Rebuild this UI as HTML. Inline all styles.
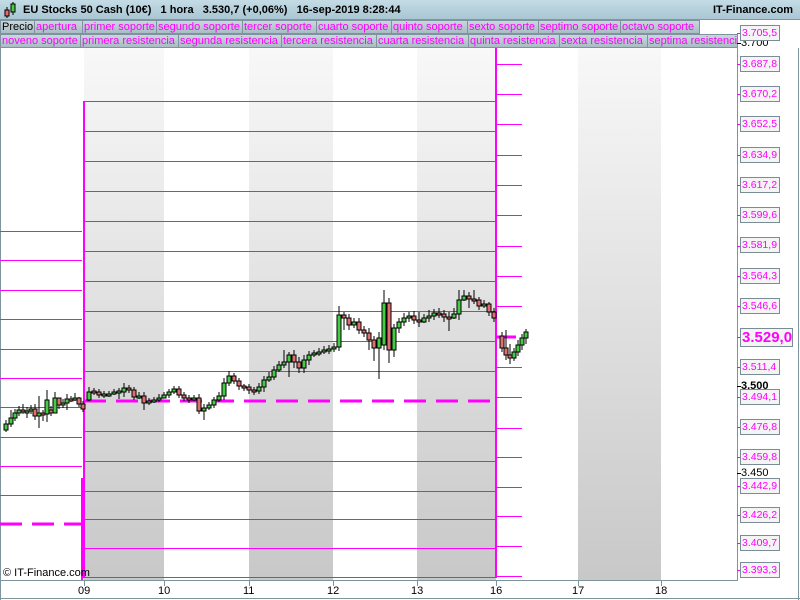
<!DOCTYPE html>
<html><head><meta charset="utf-8"><style>
*{margin:0;padding:0;box-sizing:border-box}
body{width:800px;height:600px;overflow:hidden;background:#fff;font-family:"Liberation Sans",sans-serif;position:relative}
#hdr{position:absolute;left:0;top:0;width:800px;height:20px;background:linear-gradient(#c4dce6,#a9c6d3);border-bottom:1px solid #7f97a3;font-size:11px;font-weight:bold;color:#000;white-space:nowrap}
.row{position:absolute;left:0;height:14px;font-size:11px;line-height:13px}
.row span{position:absolute;top:0;height:14px;border:1px solid #7d939d;background:linear-gradient(#c9d8de,#a9bcc4);color:#f0f;padding-left:1px;white-space:nowrap;overflow:hidden}
.lb{position:absolute;left:740px;width:40px;height:16px;border:1px solid #7a8c96;background:#f4f4f4;color:#f0f;font-size:10.5px;line-height:14px;padding-left:1px;white-space:nowrap;overflow:hidden}
.bl{position:absolute;left:741px;font-size:11px;color:#000;line-height:12px}
.xl{position:absolute;top:585px;font-size:11px;color:#000}
</style></head><body>
<div id="hdr">
<svg style="position:absolute;left:3px;top:2px" width="14" height="16"><line x1="4" y1="5" x2="4" y2="16" stroke="#000"/><rect x="2" y="8" width="4" height="6" fill="#e66" stroke="#000" stroke-width="1"/><line x1="10" y1="0" x2="10" y2="13" stroke="#000"/><rect x="8" y="2" width="4" height="8" fill="#4c4" stroke="#000" stroke-width="1"/></svg>
<span style="position:absolute;left:23px;top:4px">EU Stocks 50 Cash (10€)&nbsp;&nbsp;&nbsp;1 hora&nbsp;&nbsp;&nbsp;3.530,7 (+0,06%)&nbsp;&nbsp;&nbsp;16-sep-2019 8:28:44</span>
<span style="position:absolute;left:713px;top:4px">IT-Finance.com</span>
</div>
<div class="row" style="top:20px">
<span style="left:0;width:35px;color:#000">Precio</span><span style="left:34px;width:49px">apertura</span><span style="left:82px;width:75px">primer soporte</span><span style="left:156px;width:87px">segundo soporte</span><span style="left:242px;width:75px">tercer soporte</span><span style="left:316px;width:76px">cuarto soporte</span><span style="left:391px;width:77px">quinto soporte</span><span style="left:467px;width:72px">sexto soporte</span><span style="left:538px;width:83px">septimo soporte</span><span style="left:620px;width:80px">octavo soporte</span>
</div>
<div class="row" style="top:34px">
<span style="left:0;width:81px">noveno soporte</span><span style="left:80px;width:99px">primera resistencia</span><span style="left:178px;width:104px">segunda resistencia</span><span style="left:281px;width:96px">tercera resistencia</span><span style="left:376px;width:93px">cuarta resistencia</span><span style="left:468px;width:92px">quinta resistencia</span><span style="left:559px;width:89px">sexta resistencia</span><span style="left:647px;width:91px">septima resistencia</span>
</div>
<svg style="position:absolute;left:0;top:0" width="800" height="600">
<defs><linearGradient id="g" x1="0" y1="0" x2="0" y2="1"><stop offset="0" stop-color="#f8f8f8"/><stop offset="1" stop-color="#c8c8c8"/></linearGradient></defs>
<g fill="url(#g)"><rect x="84" y="48" width="80" height="532"/><rect x="249" y="48" width="84" height="532"/><rect x="417" y="48" width="79" height="532"/><rect x="578" y="48" width="83" height="532"/></g>
<line x1="0.5" y1="48" x2="0.5" y2="600" stroke="#7d939d"/>
<line x1="737.5" y1="48" x2="737.5" y2="580" stroke="#7d939d"/>
<line x1="0" y1="580.5" x2="738" y2="580.5" stroke="#7d939d"/>
<line x1="798.5" y1="48" x2="798.5" y2="600" stroke="#7d939d"/>
<line x1="0" y1="598.5" x2="800" y2="598.5" stroke="#7d939d"/>
<g stroke="#7d939d"><path d="M84.5 580V586M164.5 580V586M249.5 580V586M333.5 580V586M417.5 580V586M496.5 580V586M578.5 580V586M661.5 580V586"/></g>
<g stroke="#f0f" stroke-width="1" transform="translate(0,0.5)">
<path d="M0 231H82M0 260H82M0 290H82M0 319H82M0 349H82M0 378H82M0 407H82M0 437H82M0 466H82M0 495H82"/>
<path d="M84 101H496M84 131H496M84 161H496M84 191H496M84 221H496M84 251H496M84 281H496M84 311H496M84 341H496M84 371H496M84 431H496M84 461H496M84 491H496M84 519H496M84 548H496M84 577H496"/>
<path d="M497 64H522M497 94H522M497 124H522M497 155H522M497 185H522M497 215H522M497 246H522M497 276H522M497 306H522M497 367H522M497 397H522M497 428H522M497 457H522M497 487H522M497 516H522M497 546H522M497 576H522"/>
<path d="M737 33H741M737 64H741M737 94H741M737 124H741M737 155H741M737 185H741M737 215H741M737 246H741M737 276H741M737 306H741M737 337H741M737 367H741M737 397H741M737 427H741M737 457H741M737 486H741M737 515H741M737 543H741M737 570H741"/>
</g>
<g stroke="#000"><path d="M737 43.5H741M737 386.5H741M737 473.5H741"/></g>
<g stroke="#f0f" stroke-width="3" fill="none">
<path d="M0 524H82" stroke-dasharray="22 10"/>
<path d="M84 401H496" stroke-dasharray="22 10"/>
<path d="M497 337H516"/>
<path d="M84 101V578" stroke-width="2"/><path d="M496 48V578" stroke-width="2"/>
<path d="M82 478V580" stroke-width="2"/>
</g>
<g stroke="#000" stroke-width="1"><path d="M6 420V432M11 410V427M15 409V421M19 406V416M23 404V414M27 407V418M31 405V414M35 404V420M39 396V428M43 410V421M47 390V422M51 406V416M55 392V410M59 398V409M63 399V408M67 394V410M71 396V402M75 393V401M79 397V407M83 401V412
M89 387V401M94 388V395M99 389V398M104 391V398M109 391V397M114 389V395M119 388V399M124 383V397M129 385V393M134 387V400M139 392V399M144 392V410M149 398V405M154 397V403M159 394V402M164 392V398M169 389V398M174 386V394M179 386V398M184 392V401M189 395V403M194 395V401M199 394V414M204 404V420M209 402V410M214 397V408M219 392V402M224 378V400M229 371V386M234 373V384M239 378V390M244 384V391M249 384V394M254 387V395M259 383V394M264 376V392M269 372V382M274 366V380M279 361V372M284 350V368M289 352V377M294 350V368M299 357V373M304 355V373M309 351V365M314 350V357M319 348V356M324 346V354M329 345V354M334 343V352M339 306V351M344 312V330M349 314V330M354 318V328M359 318V334M364 326V337M369 328V350M374 336V361M379 332V379M384 290V350M389 298V363M394 324V357M399 318V333M404 313V326M409 312V322M414 311V324M419 312V327M424 314V323M429 310V322M434 309V320M439 308V318M444 310V322M449 312V331M454 308V319M459 290V320M464 290V301M469 292V308M474 290V304M479 297V310M484 300V308M489 302V316M494 308V322
M502 332V352M506 330V360M510 344V364M514 348V361M518 340V356M522 334V350M526 329V344"/></g>
<g fill="#4c4" stroke="#000" stroke-width="1">
<rect x="4" y="424" width="4" height="6"/><rect x="9" y="418" width="4" height="6"/><rect x="13" y="413" width="4" height="5"/><rect x="17" y="410" width="4" height="3"/><rect x="25" y="411" width="4" height="2"/><rect x="29" y="409" width="4" height="2"/><rect x="37" y="413" width="4" height="3"/><rect x="45" y="400" width="4" height="14"/><rect x="53" y="398" width="4" height="15"/><rect x="61" y="403" width="4" height="2"/><rect x="65" y="399" width="4" height="4"/><rect x="73" y="398" width="4" height="2"/>
<rect x="87" y="392" width="4" height="8"/><rect x="102" y="394" width="4" height="2"/><rect x="107" y="394" width="4" height="2"/><rect x="112" y="392" width="4" height="2"/><rect x="117" y="391" width="4" height="2"/><rect x="122" y="388" width="4" height="4"/><rect x="137" y="396" width="4" height="2"/><rect x="147" y="401" width="4" height="2"/><rect x="152" y="400" width="4" height="2"/><rect x="157" y="398" width="4" height="2"/><rect x="162" y="395" width="4" height="3"/><rect x="167" y="392" width="4" height="3"/><rect x="172" y="389" width="4" height="3"/><rect x="192" y="398" width="4" height="2"/><rect x="202" y="408" width="4" height="3"/><rect x="207" y="405" width="4" height="3"/><rect x="212" y="400" width="4" height="5"/><rect x="217" y="396" width="4" height="4"/><rect x="222" y="383" width="4" height="13"/><rect x="227" y="376" width="4" height="7"/><rect x="257" y="387" width="4" height="4"/><rect x="262" y="380" width="4" height="7"/><rect x="267" y="377" width="4" height="3"/><rect x="272" y="370" width="4" height="7"/><rect x="277" y="365" width="4" height="5"/><rect x="282" y="362" width="4" height="3"/><rect x="287" y="355" width="4" height="7"/><rect x="302" y="360" width="4" height="8"/><rect x="307" y="355" width="4" height="5"/><rect x="312" y="353" width="4" height="2"/><rect x="317" y="352" width="4" height="2"/><rect x="322" y="350" width="4" height="2"/><rect x="327" y="349" width="4" height="2"/><rect x="332" y="347" width="4" height="2"/><rect x="337" y="315" width="4" height="32"/><rect x="352" y="322" width="4" height="3"/><rect x="377" y="338" width="4" height="10"/><rect x="382" y="303" width="4" height="42"/><rect x="392" y="328" width="4" height="22"/><rect x="397" y="322" width="4" height="6"/><rect x="402" y="318" width="4" height="4"/><rect x="407" y="316" width="4" height="2"/><rect x="422" y="318" width="4" height="4"/><rect x="427" y="316" width="4" height="2"/><rect x="432" y="313" width="4" height="3"/><rect x="452" y="314" width="4" height="4"/><rect x="457" y="300" width="4" height="14"/><rect x="462" y="296" width="4" height="4"/><rect x="482" y="304" width="4" height="2"/>
<rect x="512" y="352" width="4" height="6"/><rect x="516" y="345" width="4" height="7"/><rect x="520" y="338" width="4" height="7"/><rect x="524" y="332" width="4" height="6"/>
</g>
<g fill="#e07070" stroke="#000" stroke-width="1">
<rect x="21" y="410" width="4" height="2"/><rect x="33" y="409" width="4" height="7"/><rect x="41" y="413" width="4" height="2"/><rect x="49" y="410" width="4" height="3"/><rect x="57" y="398" width="4" height="7"/><rect x="69" y="399" width="4" height="2"/><rect x="77" y="398" width="4" height="6"/><rect x="81" y="404" width="4" height="5"/>
<rect x="92" y="391" width="4" height="2"/><rect x="97" y="392" width="4" height="3"/><rect x="127" y="388" width="4" height="2"/><rect x="132" y="390" width="4" height="7"/><rect x="142" y="396" width="4" height="7"/><rect x="177" y="389" width="4" height="6"/><rect x="182" y="395" width="4" height="3"/><rect x="187" y="398" width="4" height="2"/><rect x="197" y="398" width="4" height="13"/><rect x="232" y="376" width="4" height="5"/><rect x="237" y="381" width="4" height="5"/><rect x="242" y="386" width="4" height="2"/><rect x="247" y="387" width="4" height="3"/><rect x="252" y="390" width="4" height="2"/><rect x="292" y="355" width="4" height="7"/><rect x="297" y="362" width="4" height="6"/><rect x="342" y="315" width="4" height="3"/><rect x="347" y="318" width="4" height="7"/><rect x="357" y="322" width="4" height="8"/><rect x="362" y="330" width="4" height="3"/><rect x="367" y="333" width="4" height="7"/><rect x="372" y="340" width="4" height="8"/><rect x="387" y="303" width="4" height="47"/><rect x="412" y="316" width="4" height="4"/><rect x="417" y="320" width="4" height="2"/><rect x="437" y="313" width="4" height="2"/><rect x="442" y="314" width="4" height="3"/><rect x="447" y="317" width="4" height="2"/><rect x="467" y="296" width="4" height="3"/><rect x="472" y="299" width="4" height="2"/><rect x="477" y="300" width="4" height="6"/><rect x="487" y="304" width="4" height="8"/><rect x="492" y="312" width="4" height="6"/>
<rect x="500" y="336" width="4" height="12"/><rect x="504" y="348" width="4" height="7"/><rect x="508" y="355" width="4" height="3"/>
</g>
</svg>
<div class="bl" style="top:37px">3.700</div>
<div class="bl" style="top:380px;font-weight:bold">3.500</div>
<div class="bl" style="top:467px">3.450</div>
<div class="lb" style="top:25px">3.705,5</div>
<div class="lb" style="top:56px">3.687,8</div>
<div class="lb" style="top:86px">3.670,2</div>
<div class="lb" style="top:116px">3.652,5</div>
<div class="lb" style="top:147px">3.634,9</div>
<div class="lb" style="top:177px">3.617,2</div>
<div class="lb" style="top:207px">3.599,6</div>
<div class="lb" style="top:237px">3.581,9</div>
<div class="lb" style="top:268px">3.564,3</div>
<div class="lb" style="top:298px">3.546,6</div>
<div class="lb" style="top:328px;width:53px;height:19px;font-size:15px;font-weight:bold;line-height:17px">3.529,0</div>
<div class="lb" style="top:359px">3.511,4</div>
<div class="lb" style="top:389px">3.494,1</div>
<div class="lb" style="top:419px">3.476,8</div>
<div class="lb" style="top:449px">3.459,8</div>
<div class="lb" style="top:478px">3.442,9</div>
<div class="lb" style="top:507px">3.426,2</div>
<div class="lb" style="top:535px">3.409,7</div>
<div class="lb" style="top:562px">3.393,3</div>
<div style="position:absolute;left:3px;top:567px;font-size:11px;color:#000">© IT-Finance.com</div>
<div class="xl" style="left:78px">09</div><div class="xl" style="left:158px">10</div><div class="xl" style="left:243px">11</div><div class="xl" style="left:327px">12</div><div class="xl" style="left:411px">13</div><div class="xl" style="left:490px">16</div><div class="xl" style="left:572px">17</div><div class="xl" style="left:655px">18</div>
</body></html>
